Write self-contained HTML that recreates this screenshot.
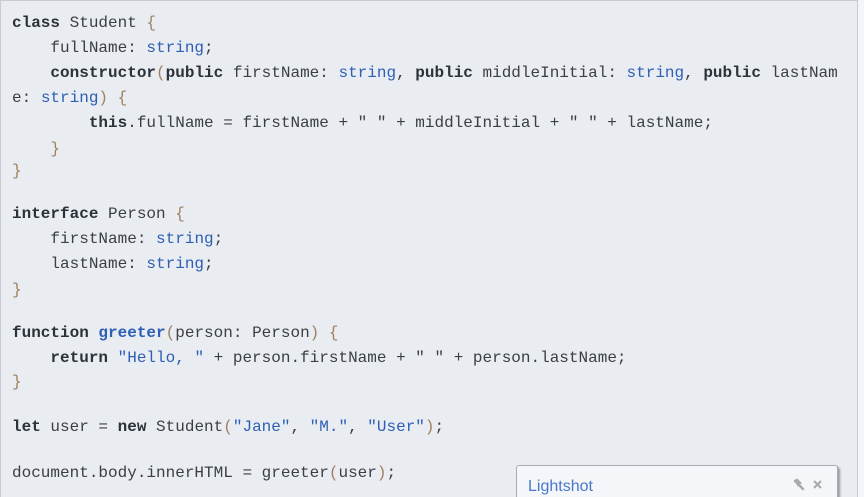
<!DOCTYPE html>
<html><head><style>
html,body{margin:0;width:864px;height:497px;overflow:hidden}
body{background:#f4f5f8;position:relative}
#code{position:absolute;left:0;top:0;width:858px;height:497px;background:#e9ecf1;border-top:1px solid #c8cbd0;border-left:1px solid #c8cbd0;border-right:1px solid #c8cbd0;box-sizing:border-box}
.l{position:absolute;left:11px;height:25px;line-height:25px;font-family:"Liberation Mono",monospace;font-size:16px;color:#3a3f44;white-space:pre}
b{font-weight:bold;color:#2c3238}
.t{color:#2d5fb5}
.s{color:#2d5fb5}
.f{color:#2d5fb5;font-weight:bold}
.p{color:#a08060}
#ls{position:absolute;left:516px;top:465px;width:320px;height:40px;background:#f4f6fa;border:1px solid #a8abb0;border-radius:3px;box-shadow:2px 2px 2px #999}
#ls span{position:absolute;left:11px;top:12px;font-family:"Liberation Sans",sans-serif;font-size:16px;color:#4a78c8}
</style></head><body>
<div id="code">
<div class="l" style="top:10px"><b>class</b> Student <span class="p">{</span></div>
<div class="l" style="top:35px">    fullName: <span class="t">string</span>;</div>
<div class="l" style="top:60px">    <b>constructor</b><span class="p">(</span><b>public</b> firstName: <span class="t">string</span>, <b>public</b> middleInitial: <span class="t">string</span>, <b>public</b> lastNam</div>
<div class="l" style="top:85px">e: <span class="t">string</span><span class="p">)</span> <span class="p">{</span></div>
<div class="l" style="top:110px">        <b>this</b>.fullName = firstName + " " + middleInitial + " " + lastName;</div>
<div class="l" style="top:136px">    <span class="p">}</span></div>
<div class="l" style="top:158px"><span class="p">}</span></div>
<div class="l" style="top:201px"><b>interface</b> Person <span class="p">{</span></div>
<div class="l" style="top:226px">    firstName: <span class="t">string</span>;</div>
<div class="l" style="top:251px">    lastName: <span class="t">string</span>;</div>
<div class="l" style="top:277px"><span class="p">}</span></div>
<div class="l" style="top:320px"><b>function</b> <span class="f">greeter</span><span class="p">(</span>person: Person<span class="p">)</span> <span class="p">{</span></div>
<div class="l" style="top:345px">    <b>return</b> <span class="s">"Hello, "</span> + person.firstName + " " + person.lastName;</div>
<div class="l" style="top:369px"><span class="p">}</span></div>
<div class="l" style="top:414px"><b>let</b> user = <b>new</b> Student<span class="p">(</span><span class="s">"Jane"</span>, <span class="s">"M."</span>, <span class="s">"User"</span><span class="p">)</span>;</div>
<div class="l" style="top:460px">document.body.innerHTML = greeter<span class="p">(</span>user<span class="p">)</span>;</div>
</div>
<div id="ls"><span>Lightshot</span>
<svg style="position:absolute;left:276px;top:12px" width="14" height="14" viewBox="0 0 14 14"><path d="M2 3 L6 7 L10 11 M2 3 L4 2 L7 5 L5 7" stroke="#aaa" stroke-width="2.5" fill="none" stroke-linecap="round"/></svg>
<svg style="position:absolute;left:295px;top:13px" width="11" height="11" viewBox="0 0 11 11"><path d="M2 2 L9 9 M9 2 L2 9" stroke="#aaa" stroke-width="2"/></svg>
</div>
</body></html>
